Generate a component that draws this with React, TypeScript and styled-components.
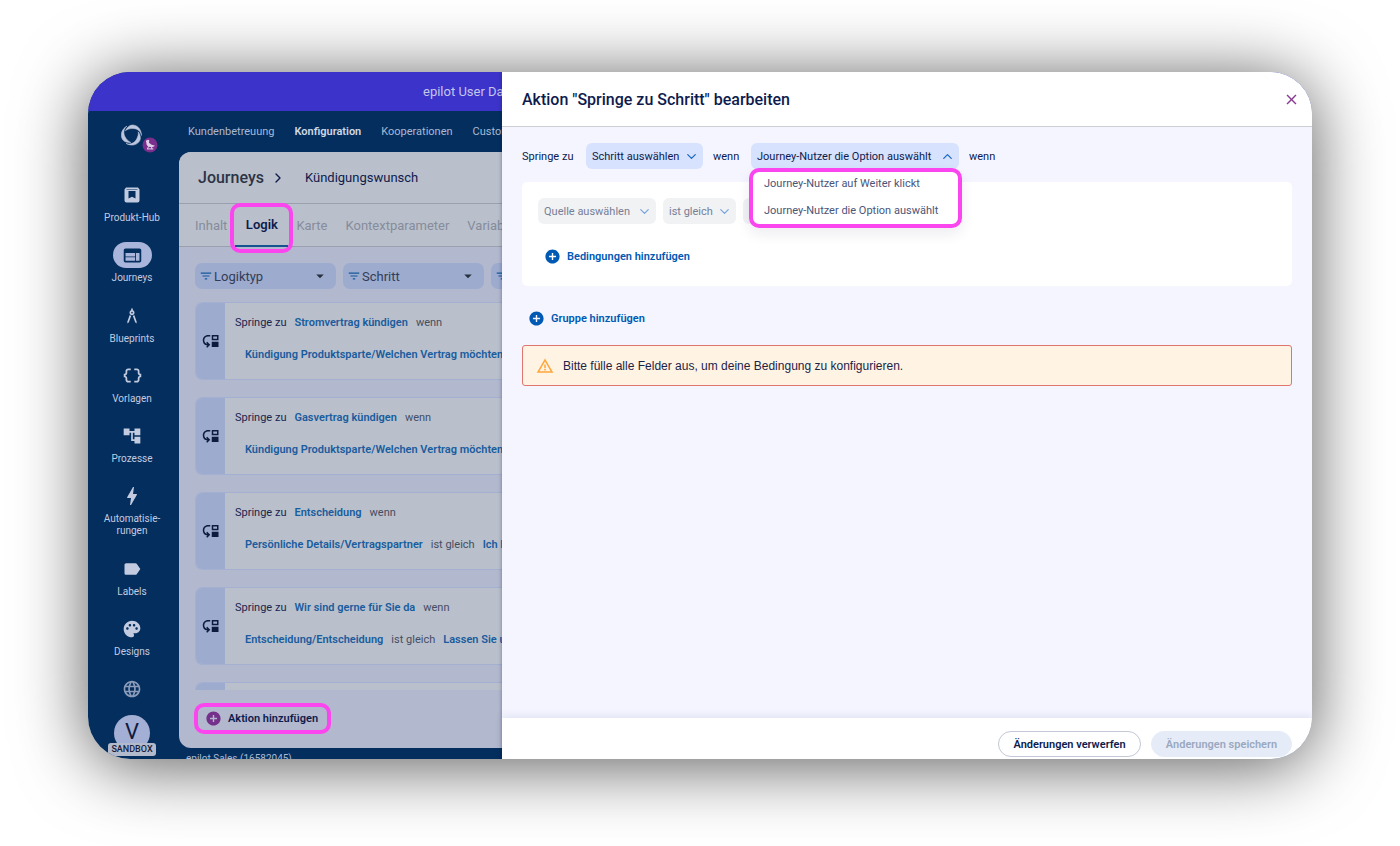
import React from "react";
import styled, { createGlobalStyle, css } from "styled-components";
import {
  MdAccountTree,
  MdAddCircle,
  MdArchitecture,
  MdArrowDropDown,
  MdBolt,
  MdClose,
  MdDataObject,
  MdFilterList,
  MdLabel,
  MdLanguage,
  MdMoveDown,
  MdPalette,
  MdWarningAmber,
  MdWeb,
} from "react-icons/md";
import { ChevronDown, ChevronRight, ChevronUp } from "lucide-react";

const c = {
  navy: "#032e5d",
  ink: "#0e1b4d",
  panel: "#b9c0cb",
  canvas: "#b2b8cd",
  chip: "#9dabcf",
  link: "#1a5c9e",
  pink: "#fb46f0",
  blue: "#0059b3",
  pale: "#c3cbe0",
};

const sans = `Roboto, "Open Sans", sans-serif`;

const GlobalStyle = createGlobalStyle`
  *, *::before, *::after { box-sizing: border-box; }
  body { margin: 0; background: #fff; font-family: ${sans}; color: ${c.ink}; }
  button, select { font: inherit; color: inherit; }
  button { border: 0; padding: 0; background: none; cursor: pointer; }
  a { color: inherit; text-decoration: none; }
  ul { list-style: none; margin: 0; padding: 0; }
  h1, h2, p { margin: 0; }
  svg { display: block; flex: none; }
`;

const Stage = styled.div`
  height: 100vh;
  min-height: 700px;
  padding: 72px 88px 87px;
  overflow: hidden;
`;

const Frame = styled.div`
  position: relative;
  display: flex;
  flex-direction: column;
  height: 100%;
  border-radius: 42px;
  overflow: hidden;
  background: ${c.navy};
`;

const Shadow = styled.div`
  height: 100%;
  border-radius: 42px;
  box-shadow: 0 6px 70px rgba(0, 0, 0, 0.66);
`;

const Banner = styled.div`
  flex: none;
  height: 39px;
  padding-left: 335px;
  line-height: 39px;
  font-size: 13px;
  white-space: nowrap;
  color: #c5c6ea;
  background: #3c33cb;
`;

const Shell = styled.div`
  flex: 1;
  min-height: 0;
  display: grid;
  grid-template-columns: 91px minmax(0, 1fr);
`;

const Sidebar = styled.aside`
  display: flex;
  flex-direction: column;
  min-height: 0;
`;

const LogoLink = styled.a`
  display: flex;
  flex: none;
  height: 71px;
  padding: 13px 0 0 33px;
`;

const SideNav = styled.nav`
  flex: 1;
  min-height: 0;
  display: flex;
  flex-direction: column;
  justify-content: space-between;
  overflow: hidden;
`;

const SideLink = styled.a<{ $faded?: boolean }>`
  display: flex;
  flex-direction: column;
  align-items: center;
  gap: 4px;
  margin-left: -3px;
  font-size: 10px;
  line-height: 12px;
  text-align: center;
  white-space: pre-line;
  color: ${c.pale};
  opacity: ${(p) => (p.$faded ? 0.7 : 1)};
`;

const IconPill = styled.span<{ $active?: boolean }>`
  display: grid;
  place-items: center;
  width: 39px;
  height: 26px;
  border-radius: 13px;
  ${(p) =>
    p.$active &&
    css`
      background: #a9b5da;
      color: ${c.navy};
    `}
`;

const Account = styled.div`
  flex: none;
  display: flex;
  flex-direction: column;
  align-items: center;
  height: 57px;
  margin-left: -3px;
  padding-top: 13px;
`;

const Avatar = styled.div`
  flex: none;
  width: 36px;
  height: 36px;
  border-radius: 50%;
  background: #a4afd6;
  color: #101c40;
  font-size: 22px;
  line-height: 34px;
  text-align: center;
`;

const Badge = styled.span`
  position: relative;
  flex: none;
  margin-top: -8px;
  padding: 0 3px;
  border-radius: 3px;
  background: #b3bacb;
  color: #14203f;
  font-size: 9px;
  font-weight: 500;
  line-height: 13px;
`;

const Main = styled.main`
  display: flex;
  flex-direction: column;
  min-width: 0;
  min-height: 0;
`;

const TopNav = styled.nav`
  flex: none;
  display: flex;
  gap: 20px;
  height: 41px;
  padding-left: 9px;
  font-size: 11px;
  line-height: 42px;
  color: #a9b9d4;
`;

const TopLink = styled.a<{ $active?: boolean }>`
  ${(p) =>
    p.$active &&
    css`
      font-weight: 600;
      color: #d0d8e6;
    `}
`;

const Panel = styled.section`
  flex: 1;
  min-height: 0;
  display: flex;
  flex-direction: column;
  border-radius: 12px 0 0 12px;
  overflow: hidden;
  background: ${c.canvas};
`;

const Crumbs = styled.header`
  flex: none;
  display: flex;
  align-items: center;
  height: 52px;
  padding-left: 19px;
  border-bottom: 1px solid #9aa0ad;
  background: ${c.panel};
  font-size: 13px;
  svg {
    margin: 0 19px 0 6px;
  }
`;

const CrumbTitle = styled.h1`
  font-size: 16px;
  font-weight: 500;
  color: #2e3345;
`;

const Tabs = styled.nav`
  flex: none;
  display: flex;
  align-items: center;
  gap: 18px;
  height: 43px;
  padding-left: 16px;
  border-bottom: 1px solid #9aa0ad;
  background: ${c.panel};
  font-size: 13px;
  white-space: nowrap;
  color: #868c9c;
`;

const Tab = styled.a``;

const ActiveTab = styled.a`
  position: relative;
  display: flex;
  justify-content: center;
  width: 63px;
  height: 50px;
  margin: 6px -15px 0;
  padding: 0 3px;
  border: 4px solid ${c.pink};
  border-radius: 10px;
  font-weight: 600;
  line-height: 36px;
  color: ${c.ink};
  &::after {
    content: "";
    position: absolute;
    right: 1px;
    bottom: 2px;
    left: 1px;
    height: 2px;
    background: #14538f;
  }
`;

const Filters = styled.div`
  flex: none;
  display: flex;
  gap: 7px;
  padding: 16px 0 13px 16px;
`;

const FilterBox = styled.label`
  display: grid;
  grid-template-columns: 12px 1fr 16px;
  align-items: center;
  gap: 3px;
  flex: none;
  width: 141px;
  height: 26px;
  padding: 0 9px 0 4px;
  border-radius: 7px;
  background: ${c.chip};
  color: #26303f;
  font-size: 13px;
  svg:first-child {
    color: #16599b;
  }
`;

const FilterSelect = styled.select`
  appearance: none;
  min-width: 0;
  border: 0;
  padding: 0;
  background: none;
  color: #343d56;
`;

const RuleList = styled.ul`
  flex: 1;
  min-height: 0;
  display: flex;
  flex-direction: column;
  gap: 17px;
  padding-left: 16px;
  overflow: hidden;
`;

const Rule = styled.li`
  flex: none;
  display: flex;
  height: 78px;
  border: 1px solid #a3b0d2;
  border-radius: 7px 0 0 7px;
  overflow: hidden;
  background: ${c.panel};
`;

const RuleKind = styled.div`
  flex: none;
  display: grid;
  place-items: center;
  width: 29px;
  background: ${c.chip};
  color: #0d1b3e;
`;

const RuleBody = styled.div`
  padding: 12px 10px 0;
  font-size: 11px;
  line-height: 16px;
  white-space: nowrap;
  color: #454d63;
`;

const RuleLine = styled.p<{ $indent?: boolean }>`
  display: flex;
  gap: 8px;
  ${(p) =>
    p.$indent &&
    css`
      margin-top: 16px;
      padding-left: 10px;
    `}
`;

const Lead = styled.span`
  color: #1a2450;
`;

const Term = styled.a`
  font-weight: 600;
  color: ${c.link};
`;

const PanelFooter = styled.div`
  flex: none;
  height: 58px;
  padding: 13px 0 0 15px;
`;

const AddAction = styled.button`
  display: flex;
  align-items: center;
  gap: 6px;
  height: 31px;
  padding: 0 9px 0 7px;
  border: 4px solid ${c.pink};
  border-radius: 10px;
  font-size: 11px;
  font-weight: 600;
  svg {
    color: #74308a;
  }
`;

const TenantLine = styled.p`
  flex: none;
  height: 11px;
  padding: 5px 0 0 7px;
  font-size: 10px;
  line-height: 12px;
  color: #a9b9d4;
`;

const Drawer = styled.section`
  position: absolute;
  top: 0;
  right: 0;
  bottom: 0;
  left: 414px;
  display: flex;
  flex-direction: column;
  background: #f4f5ff;
  box-shadow: 0 0 4px rgba(10, 20, 60, 0.4);
`;

const DrawerHeader = styled.header`
  flex: none;
  display: flex;
  align-items: center;
  justify-content: space-between;
  height: 55px;
  padding: 0 12px 0 20px;
  border-bottom: 1px solid #cdced3;
  background: #fff;
`;

const DrawerTitle = styled.h2`
  font-size: 16px;
  font-weight: 500;
`;

const CloseButton = styled.button`
  color: #8a3a94;
`;

const DrawerBody = styled.div`
  flex: 1;
  min-height: 0;
  padding: 16px 20px 0;
  font-size: 11px;
`;

const Sentence = styled.div`
  display: flex;
  align-items: center;
  gap: 10px;
  height: 26px;
`;

const Word = styled.span<{ $min: number }>`
  min-width: ${(p) => p.$min}px;
`;

const SelectBox = styled.div<{ $width: number; $muted?: boolean }>`
  position: relative;
  display: grid;
  align-items: center;
  width: ${(p) => p.$width}px;
  height: 26px;
  border-radius: 6px;
  background: ${(p) => (p.$muted ? "#f1f2f4" : "#d7e2fe")};
  color: ${(p) => (p.$muted ? "#777e96" : c.ink)};
  > svg {
    position: absolute;
    right: 4px;
    color: ${(p) => (p.$muted ? "#7ba4dc" : "#1668c4")};
    pointer-events: none;
  }
`;

const Select = styled.select`
  appearance: none;
  width: 100%;
  height: 26px;
  padding: 0 20px 0 6px;
  border: 0;
  background: none;
  font-size: 11px;
`;

const Menu = styled.ul`
  position: absolute;
  z-index: 1;
  top: 25px;
  right: -3px;
  left: -2px;
  display: grid;
  align-content: start;
  gap: 5px;
  height: 60px;
  border: 4px solid ${c.pink};
  border-radius: 10px;
  background: #fff;
  box-shadow: 0 6px 14px rgba(20, 30, 80, 0.08);
`;

const MenuItem = styled.button`
  display: block;
  width: 100%;
  height: 22px;
  padding-left: 11px;
  text-align: left;
  white-space: nowrap;
  color: #4b5578;
`;

const Group = styled.div`
  height: 104px;
  margin-top: 13px;
  padding: 16px;
  border-radius: 5px;
  background: #fff;
`;

const Condition = styled.div`
  display: flex;
  gap: 7px;
`;

const AddButton = styled.button`
  display: flex;
  align-items: center;
  gap: 6px;
  margin: 24px 0 0 6px;
  font-weight: 600;
  line-height: 16px;
  color: ${c.blue};
`;

const Alert = styled.div`
  display: flex;
  align-items: center;
  gap: 9px;
  height: 41px;
  margin-top: 18px;
  padding-left: 13px;
  border: 1px solid #e0756f;
  border-radius: 3px;
  background: #fff3e3;
  color: #1c2347;
  font-family: "Liberation Sans", Arial, sans-serif;
  font-size: 12px;
  svg {
    color: #ffa53a;
  }
`;

const DrawerFooter = styled.footer`
  flex: none;
  display: flex;
  justify-content: flex-end;
  gap: 10px;
  height: 41px;
  padding: 13px 20px 0;
  background: #fff;
  box-shadow: 0 -2px 8px rgba(60, 60, 120, 0.1);
`;

const PillButton = styled.button<{ $width: number }>`
  width: ${(p) => p.$width}px;
  height: 26px;
  border: 1px solid #c3c7d6;
  border-radius: 13px;
  font-size: 11px;
  font-weight: 600;
  &:disabled {
    border-color: #e5ecf8;
    background: #e5ecf8;
    color: #9aa8bf;
    cursor: default;
  }
`;

function Logo() {
  const blade =
    "M-6.100 -4.300C-4.500 -8 -1.500 -10 1 -10C6 -10 10 -5.500 10 0.500C9.300 -3.500 6 -6.500 1.500 -6.500C-1.500 -6.500 -4 -6 -6.100 -4.300Z";
  return (
    <svg width="40" height="32" viewBox="0 0 40 32" aria-hidden="true">
      <g fill="#bcc6dc" stroke="#bcc6dc" strokeWidth="0.500" transform="translate(10.500 11)">
        <path d={blade} />
        <path d={blade} transform="rotate(120)" />
        <path d={blade} transform="rotate(240)" />
      </g>
      <circle cx="29" cy="21" r="7.500" fill="#7b2f8c" />
      <path
        d="M24.800 16.800l1.700-.9c1.300-.4 2 .6 1.700 1.600l-.3 1.300 2.800 2 3.300.9c-1 1.200-3.200 1.500-5.200 1.200-2.400-.3-3.600-1.900-3.500-4.400z"
        fill="#ddd0e8"
      />
      <path
        d="M27.500 22.500l-1 2.300M30.500 22.500l.4 2.300M26.500 24.900h5.500"
        fill="none"
        stroke="#ddd0e8"
        strokeWidth="1"
        strokeLinecap="round"
      />
    </svg>
  );
}

function ProductHubIcon() {
  return (
    <svg width="16" height="16" viewBox="0 0 16 16" aria-hidden="true">
      <path
        fill="currentColor"
        fillRule="evenodd"
        d="M2 .5h12l1.500 2v11a2 2 0 0 1-2 2h-11a2 2 0 0 1-2-2v-11zM2.500 2v.6h11V2zM4.500 4v7.500L8 9.800l3.500 1.700V4z"
      />
    </svg>
  );
}

const sideItems = [
  { label: "Produkt-Hub", icon: <ProductHubIcon /> },
  { label: "Journeys", icon: <MdWeb size={21} />, active: true },
  { label: "Blueprints", icon: <MdArchitecture size={20} /> },
  { label: "Vorlagen", icon: <MdDataObject size={21} /> },
  { label: "Prozesse", icon: <MdAccountTree size={20} /> },
  { label: "Automatisie-\nrungen", icon: <MdBolt size={24} /> },
  { label: "Labels", icon: <MdLabel size={20} /> },
  { label: "Designs", icon: <MdPalette size={20} /> },
];

const rules = [
  { target: "Stromvertrag kündigen", source: "Kündigung Produktsparte/Welchen Vertrag möchten" },
  { target: "Gasvertrag kündigen", source: "Kündigung Produktsparte/Welchen Vertrag möchten" },
  { target: "Entscheidung", source: "Persönliche Details/Vertragspartner", value: "Ich bin" },
  { target: "Wir sind gerne für Sie da", source: "Entscheidung/Entscheidung", value: "Lassen Sie uns" },
];

function Filter({ label }: { label: string }) {
  return (
    <FilterBox>
      <MdFilterList size={14} />
      <FilterSelect aria-label={label}>
        <option>{label}</option>
      </FilterSelect>
      <MdArrowDropDown size={18} />
    </FilterBox>
  );
}

type PickerProps = {
  label: string;
  value: string;
  width: number;
  muted?: boolean;
  open?: boolean;
  children?: React.ReactNode;
};

function Picker({ label, value, width, muted, open, children }: PickerProps) {
  return (
    <SelectBox $width={width} $muted={muted}>
      <Select aria-label={label}>
        <option>{value}</option>
      </Select>
      {open ? <ChevronUp size={15} /> : <ChevronDown size={15} />}
      {children}
    </SelectBox>
  );
}

export default function App() {
  return (
    <Stage>
      <GlobalStyle />
      <Shadow>
        <Frame>
          <Banner>epilot User Days</Banner>
          <Shell>
            <Sidebar>
              <LogoLink href="#" aria-label="epilot">
                <Logo />
              </LogoLink>
              <SideNav>
                {sideItems.map((item) => (
                  <SideLink key={item.label} href="#">
                    <IconPill $active={item.active}>{item.icon}</IconPill>
                    {item.label}
                  </SideLink>
                ))}
                <SideLink href="#" aria-label="Portale" $faded>
                  <IconPill>
                    <MdLanguage size={20} />
                  </IconPill>
                </SideLink>
              </SideNav>
              <Account>
                <Avatar>V</Avatar>
                <Badge>SANDBOX</Badge>
              </Account>
            </Sidebar>
            <Main>
              <TopNav>
                <TopLink href="#">Kundenbetreuung</TopLink>
                <TopLink href="#" $active>
                  Konfiguration
                </TopLink>
                <TopLink href="#">Kooperationen</TopLink>
                <TopLink href="#">Customizing</TopLink>
              </TopNav>
              <Panel>
                <Crumbs>
                  <CrumbTitle>Journeys</CrumbTitle>
                  <ChevronRight size={16} />
                  Kündigungswunsch
                </Crumbs>
                <Tabs>
                  <Tab href="#">Inhalt</Tab>
                  <ActiveTab href="#" aria-current="page">
                    Logik
                  </ActiveTab>
                  <Tab href="#">Karte</Tab>
                  <Tab href="#">Kontextparameter</Tab>
                  <Tab href="#">Variablen</Tab>
                </Tabs>
                <Filters>
                  <Filter label="Logiktyp" />
                  <Filter label="Schritt" />
                  <Filter label="Block" />
                </Filters>
                <RuleList>
                  {rules.map((rule) => (
                    <Rule key={rule.target}>
                      <RuleKind>
                        <MdMoveDown size={18} />
                      </RuleKind>
                      <RuleBody>
                        <RuleLine>
                          <Lead>Springe zu</Lead>
                          <Term href="#">{rule.target}</Term>
                          <span>wenn</span>
                        </RuleLine>
                        <RuleLine $indent>
                          <Term href="#">{rule.source}</Term>
                          {rule.value && <span>ist gleich</span>}
                          {rule.value && <Term href="#">{rule.value}</Term>}
                        </RuleLine>
                      </RuleBody>
                    </Rule>
                  ))}
                  <Rule aria-hidden="true">
                    <RuleKind />
                  </Rule>
                </RuleList>
                <PanelFooter>
                  <AddAction type="button">
                    <MdAddCircle size={17} />
                    Aktion hinzufügen
                  </AddAction>
                </PanelFooter>
              </Panel>
              <TenantLine>epilot Sales (16582045)</TenantLine>
            </Main>
          </Shell>
          <Drawer role="dialog" aria-labelledby="drawer-title">
            <DrawerHeader>
              <DrawerTitle id="drawer-title">Aktion "Springe zu Schritt" bearbeiten</DrawerTitle>
              <CloseButton type="button" aria-label="Schließen">
                <MdClose size={17} />
              </CloseButton>
            </DrawerHeader>
            <DrawerBody>
              <Sentence>
                <Word $min={54}>Springe zu</Word>
                <Picker label="Schritt" value="Schritt auswählen" width={117} />
                <Word $min={28}>wenn</Word>
                <Picker label="Auslöser" value="Journey-Nutzer die Option auswählt" width={208} open>
                  <Menu>
                    <li>
                      <MenuItem type="button">Journey-Nutzer auf Weiter klickt</MenuItem>
                    </li>
                    <li>
                      <MenuItem type="button">Journey-Nutzer die Option auswählt</MenuItem>
                    </li>
                  </Menu>
                </Picker>
                <Word $min={28}>wenn</Word>
              </Sentence>
              <Group>
                <Condition>
                  <Picker label="Quelle" value="Quelle auswählen" width={118} muted />
                  <Picker label="Operator" value="ist gleich" width={73} muted />
                  <Picker label="Wert" value="" width={73} muted />
                </Condition>
                <AddButton type="button">
                  <MdAddCircle size={17} />
                  Bedingungen hinzufügen
                </AddButton>
              </Group>
              <AddButton type="button">
                <MdAddCircle size={17} />
                Gruppe hinzufügen
              </AddButton>
              <Alert role="alert">
                <MdWarningAmber size={18} />
                Bitte fülle alle Felder aus, um deine Bedingung zu konfigurieren.
              </Alert>
            </DrawerBody>
            <DrawerFooter>
              <PillButton type="button" $width={143}>
                Änderungen verwerfen
              </PillButton>
              <PillButton type="button" $width={141} disabled>
                Änderungen speichern
              </PillButton>
            </DrawerFooter>
          </Drawer>
        </Frame>
      </Shadow>
    </Stage>
  );
}
